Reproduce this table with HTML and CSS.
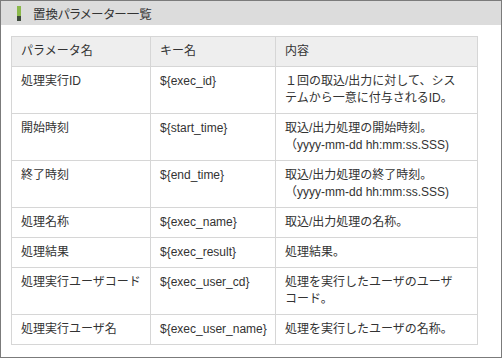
FILE: index.html
```html
<!DOCTYPE html>
<html lang="ja">
<head>
<meta charset="utf-8">
<link rel="stylesheet" href="styles.css">
</head>
<body>
<div class="frame">
  <div class="titlebar">
    <span class="marker"><span class="marker-top"></span><span class="marker-bottom"></span></span>
    <span class="title">置換パラメーター一覧</span>
  </div>
  <div class="content">
    <table class="params">
      <colgroup>
        <col class="c1"><col class="c2"><col class="c3">
      </colgroup>
      <thead>
        <tr><th>パラメータ名</th><th>キー名</th><th>内容</th></tr>
      </thead>
      <tbody>
        <tr><td>処理実行ID</td><td>${exec_id}</td><td class="desc">１回の取込/出力に対して、システムから一意に付与されるID。</td></tr>
        <tr><td>開始時刻</td><td>${start_time}</td><td class="desc">取込/出力処理の開始時刻。<br>（yyyy-mm-dd hh:mm:ss.SSS)</td></tr>
        <tr><td>終了時刻</td><td>${end_time}</td><td class="desc">取込/出力処理の終了時刻。<br>（yyyy-mm-dd hh:mm:ss.SSS)</td></tr>
        <tr><td>処理名称</td><td>${exec_name}</td><td class="desc">取込/出力処理の名称。</td></tr>
        <tr><td>処理結果</td><td>${exec_result}</td><td class="desc">処理結果。</td></tr>
        <tr><td>処理実行ユーザコード</td><td>${exec_user_cd}</td><td class="desc">処理を実行したユーザのユーザコード。</td></tr>
        <tr><td>処理実行ユーザ名</td><td>${exec_user_name}</td><td class="desc">処理を実行したユーザの名称。</td></tr>
      </tbody>
    </table>
  </div>
</div>
</body>
</html>
```
FILE: styles.css
```css
html, body {
  margin: 0;
  padding: 0;
  background: #ffffff;
}
body {
  font-family: "Liberation Sans", "Noto Sans CJK JP", sans-serif;
  color: #333333;
  font-size: 12px;
}
.frame {
  width: 502px;
  height: 358px;
  box-sizing: border-box;
  border: 1px solid #7b7b7b;
}
.titlebar {
  height: 24px;
  background: #dcdcdc;
  display: flex;
  align-items: center;
  padding-left: 16px;
}
.marker {
  display: flex;
  flex-direction: column;
  width: 4px;
  height: 15px;
  margin-right: 12px;
}
.marker-top {
  height: 10px;
  background: #8ab84a;
}
.marker-bottom {
  height: 5px;
  background: #3d4a3c;
}
.title {
  font-size: 12.5px;
  color: #333333;
  font-feature-settings: "palt";
}
.content {
  padding: 11px 0 0 10px;
}
.params {
  border-collapse: collapse;
  width: 466px;
  table-layout: fixed;
}
.c1 { width: 139px; }
.c2 { width: 125px; }
.c3 { width: 202px; }
.params th,
.params td {
  border: 1px solid #d6d6d6;
  padding: 6px 9px 6px 9px;
  line-height: 17px;
  text-align: left;
  vertical-align: top;
  font-weight: normal;
  font-size: 12px;
  color: #333333;
}
.params td.desc {
  padding-right: 13px;
}
.params th {
  background: #eeeeee;
}
```
